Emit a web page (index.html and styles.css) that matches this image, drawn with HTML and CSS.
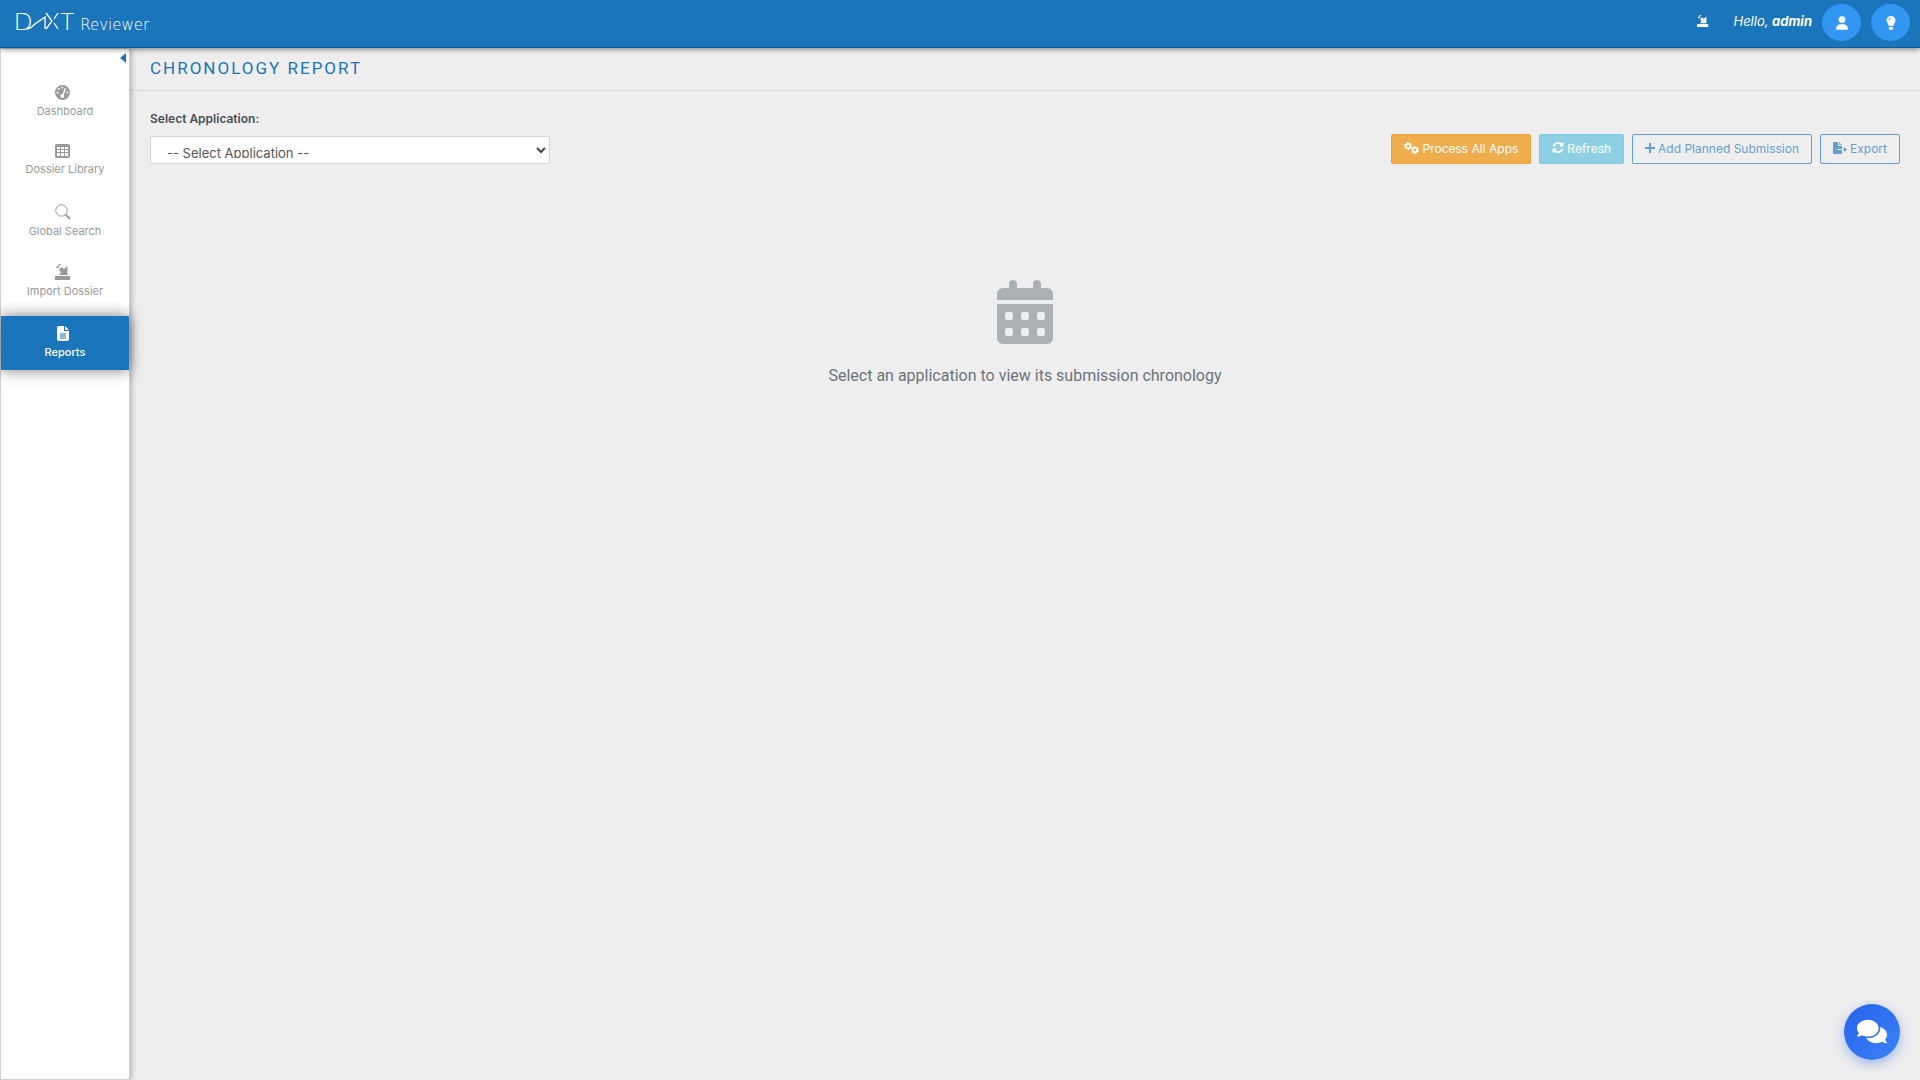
FILE: index.html
```html
<!DOCTYPE html>
<html lang="en">
<head>
<meta charset="utf-8">
<title>Chronology Report - DAXT Reviewer</title>
<link rel="stylesheet" href="styles.css">
</head>
<body>
<svg class="defs" aria-hidden="true">
  <symbol id="import" viewBox="0 0 16 16">
    <path d="M0 12h15v4H0z"/>
    <path d="M4 11l2-2.500-2-3L6.500 3 9 5l3.500-3v9z"/>
    <path d="M1 3.500l2-2 1.500 1-2 2zM3.500 0h2v1.500h-2z"/>
  </symbol>
</svg>
<header class="topbar">
  <a class="brand" href="#" aria-label="DAXT Reviewer">
    <span class="brand-name">D<svg class="brand-mark" viewBox="0 0 34 18" fill="none" stroke="currentColor" stroke-width="1.300"><path d="M0 17C3 17 5 15 8 12L18 5V17M19 1l6 8-6 8M31 1l-4 6M27 11l4 6"/></svg>T</span>
    <span class="brand-product">Reviewer</span>
  </a>
  <div class="account">
    <a class="quick-import" href="#" aria-label="Import dossier"><svg width="12" height="12"><use href="#import"/></svg></a>
    <span class="greeting">Hello, <b>admin</b></span>
    <button class="round" aria-label="Account"><svg width="12" height="14" viewBox="0 0 448 512"><path d="M224 256A128 128 0 1 0 224 0a128 128 0 1 0 0 256zm-45.700 48C79.800 304 0 383.800 0 482.300 0 498.700 13.300 512 29.700 512h388.600c16.400 0 29.700-13.300 29.700-29.700 0-98.500-79.800-178.300-178.300-178.300h-91.400z"/></svg></button>
    <button class="round" aria-label="Tips"><svg width="10" height="14" viewBox="0 0 10 14"><path d="M5 0a4.500 4.500 0 0 1 4.500 4.600C9.500 7 7.500 8 7.200 10H2.800C2.500 8 .5 7 .5 4.600A4.500 4.500 0 0 1 5 0zM2.800 11h4.400v1A1.800 1.800 0 0 1 5.500 14h-1A1.800 1.800 0 0 1 2.800 12z"/><path d="M2.500 4.500A2.400 2.400 0 0 1 5 2.200" fill="none" stroke="#3296f3" stroke-width=".8"/></svg></button>
  </div>
</header>
<div class="shell">
  <nav class="sidebar">
    <button class="collapse" aria-label="Collapse menu"></button>
    <a class="nav-item" href="#"><svg width="15" height="15" viewBox="0 0 15 15"><circle cx="7.500" cy="7.500" r="7.500"/><g fill="#fff"><circle cx="7.200" cy="2.500" r="1"/><circle cx="3.800" cy="4" r="1"/><circle cx="2.500" cy="7.500" r="1"/><circle cx="12.500" cy="7.500" r="1"/><circle cx="7.300" cy="11" r="1.900"/><path d="M9.800 3l1.300.6-2.700 7.600-1.400-.6z"/></g></svg>Dashboard</a>
    <a class="nav-item" href="#"><svg width="15" height="14" viewBox="0 0 15 14"><rect width="15" height="14" rx="2"/><path fill="#fff" d="M2 3h3v2H2zM6 3h3v2H6zM10 3h3v2h-3zM2 6h3v2H2zM6 6h3v2H6zM10 6h3v2h-3zM2 9h3v3H2zM6 9h3v3H6zM10 9h3v3h-3z"/></svg>Dossier Library</a>
    <a class="nav-item" href="#"><svg width="16" height="18" viewBox="0 -2 16 18" fill="none" stroke="currentColor"><circle cx="6.500" cy="6.500" r="5.700"/><path d="M10.600 10.600l4.400 4.400" stroke-width="2"/></svg>Global Search</a>
    <a class="nav-item" href="#"><svg width="16" height="16"><use href="#import"/></svg>Import Dossier</a>
    <a class="nav-item active" href="#" aria-current="page"><svg width="12" height="15" viewBox="0 0 12 15"><path d="M2 0h5v5h5v8a2 2 0 0 1-2 2H2a2 2 0 0 1-2-2V2a2 2 0 0 1 2-2zM8 0l4 4H8z"/><path d="M3 8h6M3 10h6M3 12h6" stroke="#1a75bb"/></svg>Reports</a>
  </nav>
  <main class="page">
    <h1 class="page-title">Chronology Report</h1>
    <div class="content">
      <div class="toolbar">
        <div class="field">
          <label for="application">Select Application:</label>
          <div class="select-box">
            <select id="application"><option>-- Select Application --</option></select>
            <svg class="chevron" width="10" height="7" viewBox="0 0 10 7" fill="none" stroke="#444" stroke-width="2"><path d="M1 1l4 4 4-4"/></svg>
          </div>
        </div>
        <div class="actions">
          <button class="btn warning"><svg width="15" height="12" viewBox="0 0 15 12" fill="none" stroke="currentColor"><circle cx="4" cy="4" r="2.300" stroke-width="1.800"/><circle cx="4" cy="4" r="3.500" stroke-dasharray="1.800 1.860"/><circle cx="11" cy="8" r="2.300" stroke-width="1.800"/><circle cx="11" cy="8" r="3.500" stroke-dasharray="1.800 1.860"/></svg>Process All Apps</button>
          <button class="btn info"><svg width="12" height="12" viewBox="0 0 1536 1664"><path d="M1511 928q0 5-1 7-64 268-268 434.500t-478 166.500q-146 0-282.500-55t-243.500-157l-129 129q-19 19-45 19t-45-19-19-45v-448q0-26 19-45t45-19h448q26 0 45 19t19 45-19 45l-137 137q71 66 161 102t187 36q134 0 250-65t186-179q11-17 53-117 8-23 30-23h192q13 0 22.500 9.500t9.500 22.500zm25-800v448q0 26-19 45t-45 19h-448q-26 0-45-19t-19-45 19-45l138-138q-148-137-349-137-134 0-250 65t-186 179q-11 17-53 117-8 23-30 23h-199q-13 0-22.500-9.500t-9.500-22.500v-7q65-268 270-434.500t480-166.500q146 0 284 55.500t245 156.500l130-129q19-19 45-19t45 19 19 45z"/></svg>Refresh</button>
          <button class="btn outline"><svg width="10" height="12" viewBox="0 0 10 12"><path d="M4 1h2v4h4v2H6v4H4V7H0V5h4z"/></svg>Add Planned Submission</button>
          <button class="btn outline"><svg width="14" height="12" viewBox="0 0 14 12"><path d="M1 0h4v4h4v3H4v1h5v3a1 1 0 0 1-1 1H1a1 1 0 0 1-1-1V1a1 1 0 0 1 1-1zM6 0l3 3H6zM10 7h1V5l3 2.500L11 10V8h-1z"/></svg>Export</button>
        </div>
      </div>
      <section class="empty">
        <svg width="56" height="64" viewBox="0 0 56 64"><path fill-rule="evenodd" d="M16 0a4 4 0 0 1 4 4v4h16V4a4 4 0 0 1 8 0v4h6a6 6 0 0 1 6 6v6H0v-6a6 6 0 0 1 6-6h6V4a4 4 0 0 1 4-4zM0 24h56v34a6 6 0 0 1-6 6H6a6 6 0 0 1-6-6zM10 32a2 2 0 0 0-2 2v4a2 2 0 0 0 2 2h4a2 2 0 0 0 2-2v-4a2 2 0 0 0-2-2zM26 32a2 2 0 0 0-2 2v4a2 2 0 0 0 2 2h4a2 2 0 0 0 2-2v-4a2 2 0 0 0-2-2zM42 32a2 2 0 0 0-2 2v4a2 2 0 0 0 2 2h4a2 2 0 0 0 2-2v-4a2 2 0 0 0-2-2zM10 48a2 2 0 0 0-2 2v4a2 2 0 0 0 2 2h4a2 2 0 0 0 2-2v-4a2 2 0 0 0-2-2zM26 48a2 2 0 0 0-2 2v4a2 2 0 0 0 2 2h4a2 2 0 0 0 2-2v-4a2 2 0 0 0-2-2zM42 48a2 2 0 0 0-2 2v4a2 2 0 0 0 2 2h4a2 2 0 0 0 2-2v-4a2 2 0 0 0-2-2z"/></svg>
        <p>Select an application to view its submission chronology</p>
      </section>
    </div>
  </main>
</div>
<button class="chat" aria-label="Open chat"><svg width="30" height="27" viewBox="0 0 576 512"><path d="M416 192c0-88.400-93.100-160-208-160S0 103.600 0 192c0 34.300 14.100 65.900 38 92-13.400 30.200-35.500 54.200-35.800 54.500-2.200 2.300-2.800 5.700-1.500 8.700S4.800 352 8 352c36.600 0 66.900-12.300 88.700-25 32.200 15.700 70.300 25 111.300 25 114.900 0 208-71.600 208-160zm122 220c23.900-26 38-57.700 38-92 0-66.900-53.500-124.200-129.300-148.100.9 6.600 1.300 13.300 1.300 20.100 0 105.900-107.700 192-240 192-10.800 0-21.300-.8-31.700-1.900C207.800 439.600 281.800 480 368 480c41 0 79.100-9.200 111.300-25 21.800 12.700 52.100 25 88.700 25 3.200 0 6.100-1.900 7.300-4.800 1.300-2.900.7-6.300-1.500-8.700-.3-.3-22.400-24.200-35.800-54.500z"/></svg></button>
</body>
</html>
```
FILE: styles.css
```css
* { box-sizing: border-box; }
body {
  margin: 0;
  min-height: 100vh;
  display: flex;
  flex-direction: column;
  background: #eee;
  color: #495057;
  font-family: Inter, "Liberation Sans", sans-serif;
  font-size: 12px;
}
a { color: inherit; text-decoration: none; }
button { font: inherit; cursor: pointer; }
svg { fill: currentColor; flex: none; }
svg[fill="none"] { fill: none; }
.defs { position: absolute; width: 0; height: 0; }

.topbar {
  position: relative;
  z-index: 2;
  height: 48px;
  display: flex;
  justify-content: space-between;
  padding: 0 10px 0 14px;
  background: #1a75bb;
  border-bottom: 1px solid #0f5a9c;
  box-shadow: 0 1px 6px rgba(0, 0, 0, .5);
  color: #fff;
}
.brand { display: flex; align-items: baseline; gap: 6px; height: 42px; line-height: 42px; }
.brand-name { font-family: Lato, sans-serif; font-size: 24px; font-weight: 300; }
.brand-mark { width: 34px; height: 18px; margin: 0 -1px 0 -5px; }
.brand-product { font-family: "DejaVu Sans", sans-serif; font-size: 15px; font-weight: 200; }
.account { display: flex; align-items: center; gap: 10px; padding-bottom: 2px; }
.quick-import { display: flex; margin-right: 14px; padding-bottom: 3px; }
.greeting { font-size: 13px; font-style: italic; padding-bottom: 3px; }
.round {
  width: 39px;
  height: 37px;
  display: grid;
  place-items: center;
  padding: 0;
  border: 0;
  border-radius: 50%;
  background: #3296f3;
  color: #fff;
}

.shell { flex: 1; display: flex; }
.sidebar {
  position: relative;
  width: 130px;
  display: flex;
  flex-direction: column;
  gap: 5px;
  padding-top: 26px;
  background: #fff;
  border: 1px solid #d0d0d0;
  box-shadow: 1px 0 6px rgba(0, 0, 0, .3);
}
.collapse {
  position: absolute;
  top: 4px;
  right: 3px;
  width: 6px;
  height: 10px;
  padding: 0;
  border: 0;
  background: #1a75bb;
  clip-path: polygon(100% 0, 100% 100%, 0 50%);
}
.nav-item {
  display: flex;
  flex-direction: column;
  align-items: center;
  gap: 3px;
  padding: 10px 0;
  color: #999;
  font-size: 11px;
  line-height: 16px;
}
.nav-item svg { margin-right: 5px; }
.nav-item.active {
  margin-top: 2px;
  background: #1a75bb;
  color: #fff;
  font-weight: 500;
  box-shadow: 0 0 14px rgba(0, 0, 0, .5);
}

.page { flex: 1; }
.page-title {
  margin: 0;
  padding: 8px 20px 10px;
  border-bottom: 1px solid #d9d9d9;
  color: #1a75bb;
  font-family: Roboto, sans-serif;
  font-size: 17px;
  line-height: 24px;
  font-weight: 400;
  letter-spacing: 2px;
  text-transform: uppercase;
}
.content { padding: 20px; }
.toolbar {
  display: flex;
  justify-content: space-between;
  align-items: flex-end;
  padding-bottom: 16px;
  border-bottom: 1px solid #e9e9e9;
}
.field { width: 400px; }
.field label { display: block; margin-bottom: 9px; line-height: 16px; font-weight: 600; }
.select-box { position: relative; }
.select-box select {
  display: block;
  width: 100%;
  height: 28px;
  padding: 8px 16px 5px;
  border: 1px solid #d5d5d5;
  border-radius: 0;
  background: #fff;
  appearance: none;
  color: #555;
  font: inherit;
  font-size: 13px;
}
.chevron { position: absolute; right: 4px; top: 11px; pointer-events: none; }
.actions { display: flex; gap: 8px; }
.btn {
  height: 30px;
  display: flex;
  align-items: center;
  gap: 3px;
  padding: 0 12px 2px;
  border: 1px solid;
  border-radius: 2px;
}
.warning { background: #f0ad4e; border-color: #eea236; color: #fff; }
.info { background: #8dd0e3; border-color: #7ccbe0; color: #fff; }
.outline { background: transparent; border-color: #5f9fd3; color: #66a0d0; }
.empty {
  display: flex;
  flex-direction: column;
  align-items: center;
  padding-top: 99px;
  color: #6c757d;
}
.empty svg { color: #abb0b4; }
.empty p { margin: 20px 0 0; font-family: Roboto, sans-serif; font-size: 16px; line-height: 24px; }

.chat {
  position: fixed;
  right: 20px;
  bottom: 20px;
  width: 56px;
  height: 56px;
  display: grid;
  place-items: center;
  padding: 0 0 2px;
  border: 0;
  border-radius: 50%;
  background: linear-gradient(135deg, #2563eb, #3b82f6);
  box-shadow: 0 4px 12px rgba(37, 99, 235, .4);
  color: #fff;
}
```
